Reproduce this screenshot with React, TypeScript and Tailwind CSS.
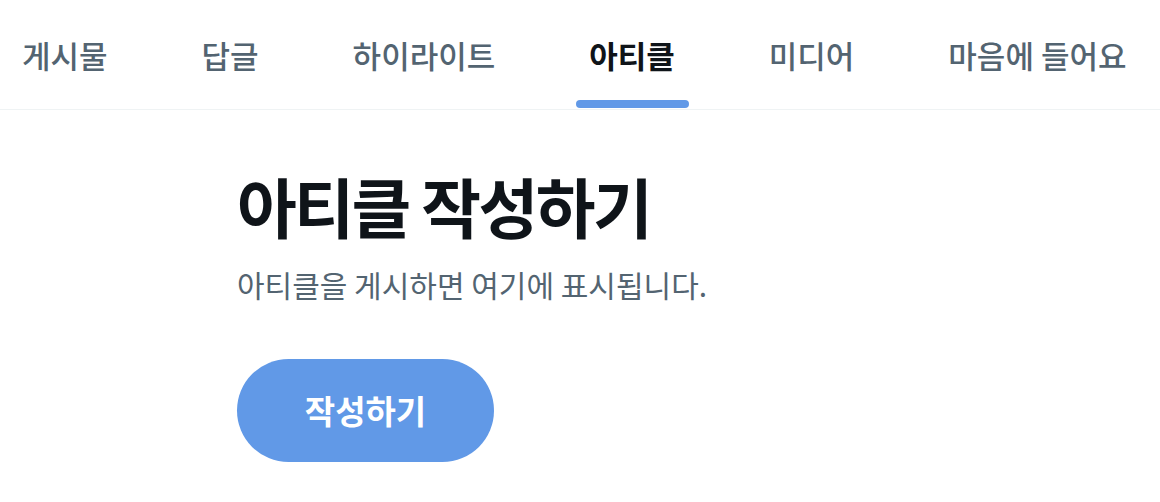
const tabs = ["게시물", "답글", "하이라이트", "아티클", "미디어", "마음에 들어요"];

export default function App() {
  const active = 3;

  return (
    <div
      className="w-[1160px] h-[502px] bg-white overflow-hidden"
      style={{ fontFamily: '"Noto Sans CJK KR", "Noto Sans", sans-serif' }}
    >
      <nav className="h-[110px] border-b border-[#eff3f4] flex items-stretch pl-[22px] gap-[94px]">
        {tabs.map((tab, i) => (
          <div key={tab} className="relative flex items-center">
            <span
              className={`text-[31px] leading-none whitespace-nowrap ${
                i === active ? "font-bold text-[#0f1419]" : "font-medium text-[#536471]"
              }`}
            >
              {tab}
            </span>
            {i === active && (
              <div className="absolute bottom-[1px] -left-[13px] -right-[14px] h-[8px] rounded-full bg-[#6199e7]" />
            )}
          </div>
        ))}
      </nav>

      <section className="pl-[237px] pt-[59px]">
        <h2 className="text-[65px] leading-[72px] font-bold text-[#0f1419] tracking-[-2.5px]">
          아티클 작성하기
        </h2>
        <p className="mt-[25px] text-[30px] leading-[36px] text-[#536471]">
          아티클을 게시하면 여기에 표시됩니다.
        </p>
        <button className="mt-[57px] w-[257px] h-[103px] rounded-full bg-[#6199e7] text-white text-[33px] font-bold">
          작성하기
        </button>
      </section>
    </div>
  );
}
